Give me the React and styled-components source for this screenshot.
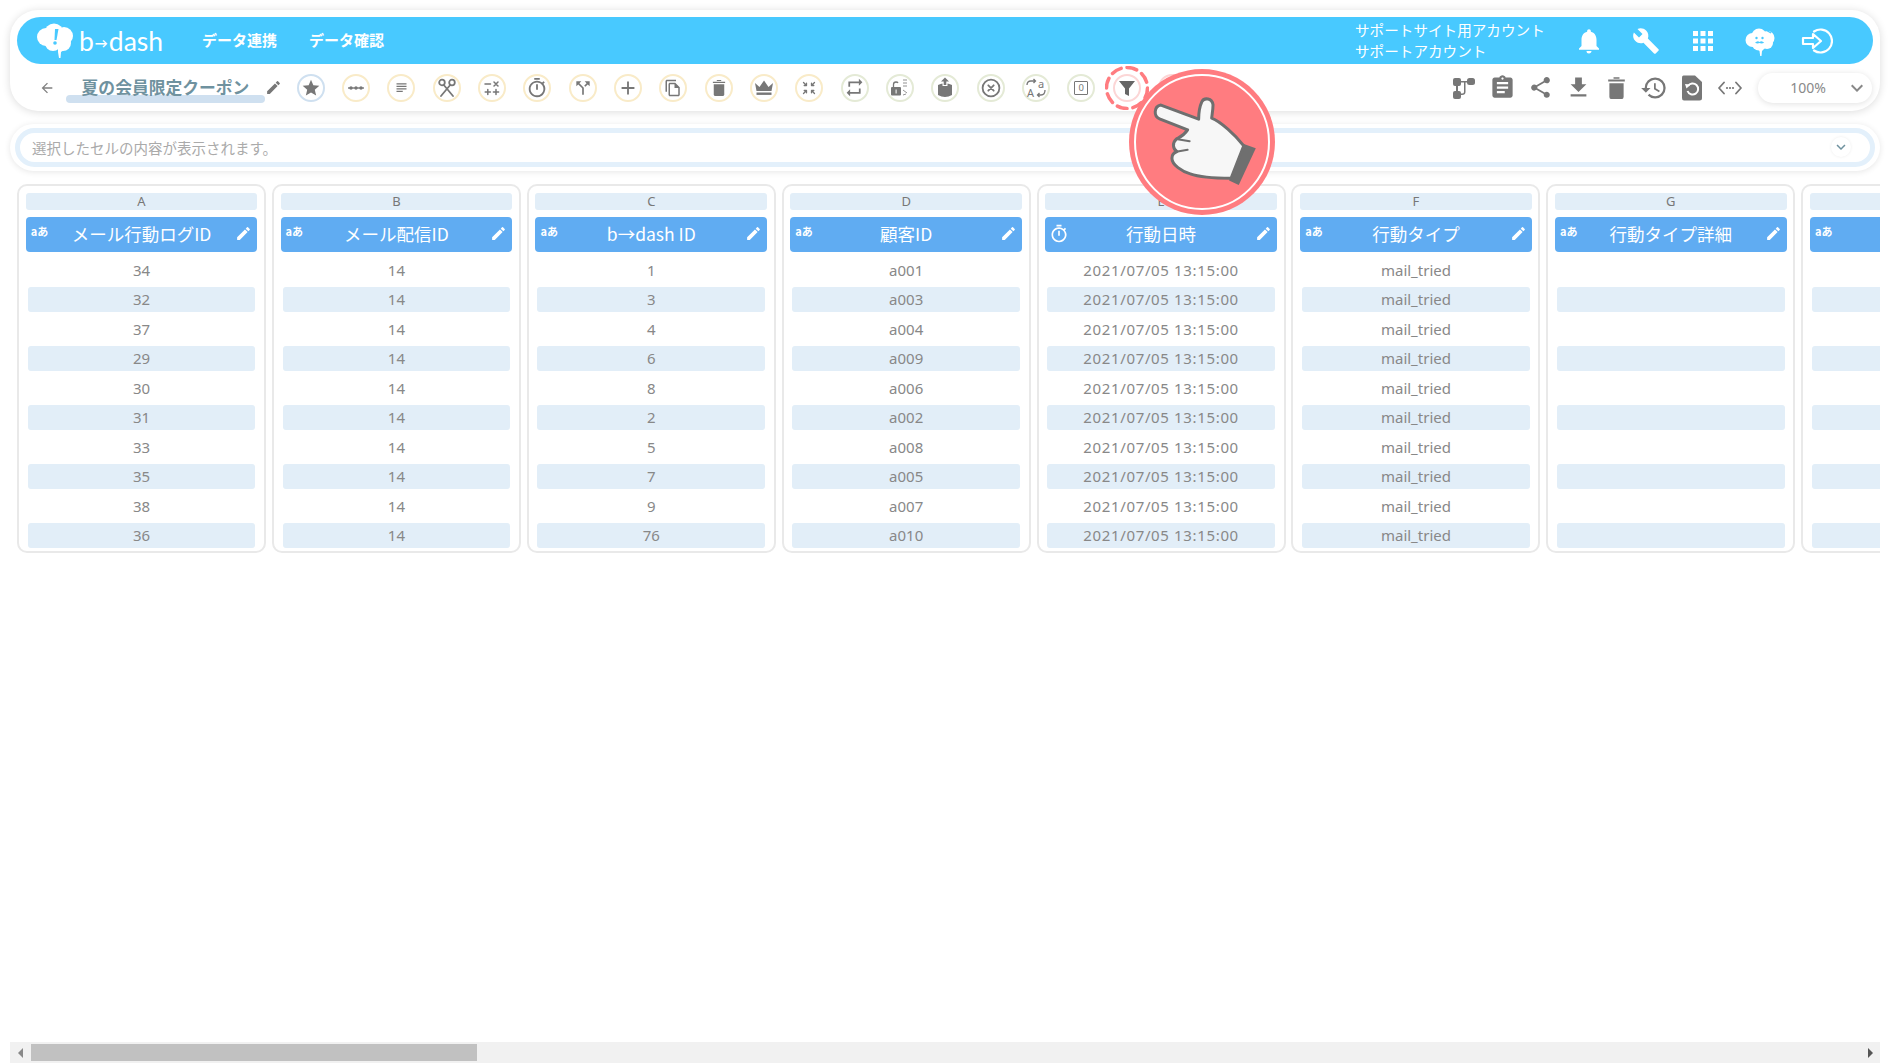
import React from 'react';
import styled, { createGlobalStyle } from 'styled-components';
import {
  MdArrowBack, MdEdit, MdStar, MdSubject, MdCallSplit, MdAdd, MdOutlineFileCopy, MdRepeat,
  MdAssignment, MdShare, MdFileDownload, MdHistory, MdNotifications, MdBuild, MdApps,
  MdExpandMore, MdOutlineTimer,
} from 'react-icons/md';

const GlobalStyle = createGlobalStyle`
  html, body { margin: 0; padding: 0; background: #fff; }
  body { font-family: "Noto Sans CJK JP", "Noto Sans", sans-serif; }
`;

const Page = styled.div`
  position: relative;
  height: 100vh;
  box-sizing: border-box;
  padding: 10px 10px 0;
  display: flex;
  flex-direction: column;
  overflow: hidden;
`;

const HeaderCard = styled.div`
  background: #fff;
  border-radius: 28px;
  padding: 7px 7px 0;
  height: 101px;
  box-sizing: border-box;
  box-shadow: 0 1px 9px rgba(0, 0, 0, 0.14);
`;

const TopBar = styled.div`
  height: 47px;
  background: #48c9ff;
  border-radius: 24px;
  padding: 0 28px 0 19px;
  display: flex;
  align-items: center;
  color: #fff;
`;

const Logo = styled.div`
  display: flex;
  align-items: center;
  gap: 5px;
  width: 166px;
`;

const LogoText = styled.span`
  font-family: "Lato", sans-serif;
  font-size: 26.5px;
  line-height: 30px;
  margin-top: 3px;
  small { font-size: 13px; margin: 0 1px; font-weight: 700; vertical-align: 3px; }
`;

const NavLink = styled.a`
  font-size: 15px;
  font-weight: 700;
  margin: -2px 32px 0 0;
  white-space: nowrap;
`;

const Account = styled.div`
  margin: -2px 0 0 auto;
  width: 205px;
  font-size: 14.6px;
  line-height: 21px;
  white-space: nowrap;
`;

const HeadIcon = styled.div`
  width: 57px;
  display: flex;
  justify-content: center;
  align-items: center;
`;

const ToolRow = styled.div`
  height: 47px;
  display: flex;
  align-items: center;
`;

const BackLink = styled.div`
  margin: 0 11px 0 22px;
  width: 16px;
  height: 16px;
  color: #808080;
  display: flex;
`;

const Title = styled.div`
  position: relative;
  width: 199px;
  text-align: center;
  font-size: 16.8px;
  font-weight: 700;
  color: #6f929f;
  white-space: nowrap;
  margin-top: -2px;
  &::after {
    content: '';
    position: absolute;
    left: 0;
    right: 0;
    bottom: -4px;
    height: 8px;
    border-radius: 4px;
    background: #cfe0f0;
    z-index: 0;
  }
  span { position: relative; z-index: 1; }
`;

const TitleEdit = styled.div`
  width: 31.7px;
  color: #777;
  display: flex;
`;

const Tools = styled.div`
  display: flex;
  gap: 17.33px;
`;

const toneColors = { blue: '#cfe0f0', yellow: '#f9ebc8', green: '#e4ead6', pink: '#fcd6d6' };

const ToolCircle = styled.div`
  position: relative;
  width: 28px;
  height: 28px;
  box-sizing: border-box;
  border-radius: 50%;
  border: 2px solid ${props => toneColors[props.$tone]};
  color: #777;
  display: flex;
  align-items: center;
  justify-content: center;
  flex-shrink: 0;
`;

const DashRing = styled.svg`
  position: absolute;
  left: -10px;
  top: -10px;
`;

const TranslateGlyph = styled.span`
  position: absolute;
  left: ${props => props.$x}px;
  top: ${props => props.$y}px;
  font-family: "Noto Sans", sans-serif;
  font-size: 11px;
  line-height: 12px;
`;

const TranslateBox = styled.div`
  position: relative;
  width: 24px;
  height: 24px;
  flex-shrink: 0;
`;

const ZeroBox = styled.div`
  width: 14px;
  height: 14px;
  box-sizing: border-box;
  border: 1.5px solid currentColor;
  border-radius: 1px;
  font-family: "Noto Sans", sans-serif;
  font-size: 9.5px;
  line-height: 11px;
  text-align: center;
`;

const RightTools = styled.div`
  margin-left: auto;
  display: flex;
  align-items: center;
  color: #777;
`;

const RightIcon = styled.div`
  width: 38px;
  display: flex;
  justify-content: center;
  align-items: center;
`;

const ZoomSelect = styled.div`
  width: 114px;
  height: 30px;
  margin: 0 1px 0 9px;
  border-radius: 15px;
  background: #fff;
  box-shadow: 0 1px 6px rgba(0, 0, 0, 0.12);
  display: flex;
  align-items: center;
  justify-content: center;
  position: relative;
  font-size: 14px;
  color: #8a8a8a;
  font-family: "Noto Sans", sans-serif;
  padding-right: 14px;
  box-sizing: border-box;
`;

const ZoomArrow = styled.div`
  position: absolute;
  right: 3px;
  top: 3px;
  color: #888;
  display: flex;
`;

const FormulaCard = styled.div`
  margin-top: 13px;
  height: 47px;
  box-sizing: border-box;
  padding: 4px 5px;
  background: #fff;
  border-radius: 24px;
  box-shadow: 0 1px 6px rgba(0, 0, 0, 0.1);
`;

const FormulaInput = styled.div`
  height: 39px;
  box-sizing: border-box;
  border: 5px solid #e3f0fb;
  border-radius: 20px;
  padding: 0 19px 1px 12px;
  display: flex;
  align-items: center;
  justify-content: space-between;
  font-size: 14.5px;
  color: #aaa;
`;

const ExpandButton = styled.div`
  width: 20px;
  height: 20px;
  border-radius: 50%;
  background: #fff;
  box-shadow: 0 0 3px rgba(0, 0, 0, 0.08);
  color: #6f929f;
  display: flex;
  align-items: center;
  justify-content: center;
`;

const Sheet = styled.div`
  margin-top: 13px;
  padding-left: 7px;
  display: flex;
  gap: 5.9px;
  overflow: hidden;
  flex: 1;
  align-items: flex-start;
`;

const Column = styled.div`
  width: 249px;
  flex-shrink: 0;
  box-sizing: border-box;
  border: 2px solid #e9e9e9;
  border-radius: 10px;
  padding: 7px 6.7px 2.9px;
  background: #fff;
`;

const ColumnLetter = styled.div`
  height: 17px;
  line-height: 17px;
  background: #e2eef8;
  border-radius: 3px;
  text-align: center;
  font-family: "Noto Sans", sans-serif;
  font-size: 13px;
  color: #777;
`;

const ColumnHead = styled.div`
  position: relative;
  margin-top: 7px;
  height: 35px;
  padding-bottom: 2px;
  box-sizing: border-box;
  background: #60acf2;
  border-radius: 4px;
  color: #fff;
  font-size: 17.5px;
  display: flex;
  align-items: center;
  justify-content: center;
  white-space: nowrap;
`;

const TypeTag = styled.span`
  position: absolute;
  left: 5px;
  top: 7px;
  font-size: 11px;
  line-height: 14px;
  font-weight: 700;
`;

const TypeIcon = styled.span`
  position: absolute;
  left: 4px;
  top: 7px;
  display: flex;
`;

const HeadEdit = styled.span`
  position: absolute;
  right: 5px;
  top: 8px;
  display: flex;
`;

const Rows = styled.div`
  margin-top: 5.5px;
  display: flex;
  flex-direction: column;
  gap: 4.55px;
`;

const Cell = styled.div`
  height: 25px;
  margin: 0 2px;
  border-radius: 3px;
  background: ${props => (props.$striped ? '#e2eef8' : 'transparent')};
  color: #888;
  font-family: "Noto Sans", sans-serif;
  font-size: 15px;
  letter-spacing: ${props => (props.$spaced ? '0.65px' : 'normal')};
  line-height: 25px;
  text-align: center;
  white-space: nowrap;
`;

const ScrollBar = styled.div`
  height: 21px;
  background: #f1f1f1;
  display: flex;
  align-items: center;
  justify-content: space-between;
  padding: 0 7px 0 8px;
  position: relative;
`;

const ScrollThumb = styled.div`
  position: absolute;
  left: 21px;
  top: 2px;
  width: 446px;
  height: 17px;
  background: #c1c1c1;
`;

const ScrollArrow = styled.span`
  width: 0;
  height: 0;
  border-top: 5px solid transparent;
  border-bottom: 5px solid transparent;
  ${props => (props.$right ? 'border-left: 5px solid #555;' : 'border-right: 5px solid #888;')}
`;

// callout over the toolbar, pointing at the filter button
const Callout = styled.div`
  position: absolute;
  left: 1129px;
  top: 69px;
  width: 146px;
  height: 146px;
  border-radius: 50%;
  background: #ff7c80;
  z-index: 5;
  &::before {
    content: '';
    position: absolute;
    inset: 5px;
    border: 2px solid #fff;
    border-radius: 50%;
  }
`;

const HandSvg = styled.svg`
  position: absolute;
  inset: 0;
`;

const Hand = () => (
  <HandSvg viewBox="178 58 434 437" width="146" height="146">
    <polygon points="518,282 556,295 505,405 476,392" fill="#6f6f6f" />
    <path
      d="M272 166 L385 208 C385 190 388 170 395 155 C402 143 425 145 428 165 C428 180 425 195 424 205 C450 215 495 255 520 288 L482 385 C440 385 390 383 360 372 C335 365 305 345 305 325 C305 315 312 308 320 305 C308 298 305 280 318 268 C328 262 340 258 352 240 L268 207 C250 200 250 170 272 166 Z"
      fill="#f7f7f7"
      stroke="#6f6f6f"
      strokeWidth="9"
      strokeLinejoin="round"
    />
    <path d="M322 268 L358 274 M322 305 L352 300" stroke="#6f6f6f" strokeWidth="6" fill="none" strokeLinecap="round" />
  </HandSvg>
);

const BubbleLogo = () => (
  <svg width="38" height="36" viewBox="0 0 38 36">
    <g fill="#fff">
      <circle cx="10" cy="14" r="9" />
      <circle cx="18" cy="10" r="9.5" />
      <circle cx="28" cy="13" r="9" />
      <circle cx="27" cy="20" r="8" />
      <circle cx="17" cy="20" r="8" />
      <path d="M22 24 L31 25 L25 29 L24.5 35 L23 35 L22 29 Z" />
    </g>
    <path d="M19 6 L22.5 6 L20.5 17 L18.5 17 Z" fill="#48c9ff" />
    <circle cx="19" cy="20" r="1.8" fill="#48c9ff" />
  </svg>
);

const BrainFace = () => (
  <svg width="30" height="30" viewBox="0 0 30 30">
    <g fill="#fff">
      <circle cx="7.5" cy="14" r="7" />
      <circle cx="14" cy="10" r="7.5" />
      <circle cx="22.5" cy="12" r="7" />
      <circle cx="22" cy="17" r="6" />
      <circle cx="14" cy="17" r="7.5" />
      <path d="M12 22 L21 21 L17 25 L16.5 30 L15.2 30 L14.5 25 Z" />
    </g>
    <circle cx="11.5" cy="12" r="1.2" fill="#48c9ff" />
    <circle cx="17.5" cy="12" r="1.2" fill="#48c9ff" />
    <path d="M10 16.8 Q12.5 14.2 14.5 16 Q16.8 14.2 19.2 16.8 Q16.5 18 14.5 17 Q12.5 18 10 16.8 Z" fill="#48c9ff" />
    <path d="M19 3 L26 7" stroke="#48c9ff" strokeWidth="1.2" />
  </svg>
);

const ExitIcon = () => (
  <svg width="32" height="28" viewBox="0 0 32 28" fill="none" stroke="#fff" strokeWidth="2.2" strokeLinejoin="round">
    <path d="M13 4.5 A11.5 11.5 0 1 1 13 23.5" strokeLinecap="round" />
    <path d="M2 11 H12 V7 L20 14 L12 21 V17 H2 Z" />
  </svg>
);

const s = { fill: 'none', stroke: 'currentColor', strokeWidth: 1.8, strokeLinecap: 'round', strokeLinejoin: 'round' };

const ChainIcon = () => (
  <svg width="18" height="18" viewBox="0 0 18 18">
    <path d="M1 9 H17" stroke="currentColor" strokeWidth="1.4" />
    <circle cx="4" cy="9" r="1.7" fill="currentColor" />
    <circle cx="9" cy="9" r="1.7" fill="currentColor" />
    <circle cx="14" cy="9" r="1.7" fill="currentColor" />
  </svg>
);

const ScissorsIcon = () => (
  <svg width="20" height="20" viewBox="0 0 20 20" {...s}>
    <circle cx="5" cy="4.5" r="2.8" />
    <circle cx="15" cy="4.5" r="2.8" />
    <path d="M6.8 7 L16 18 M13.2 7 L4 18" />
  </svg>
);

const CalcIcon = () => (
  <svg width="18" height="18" viewBox="0 0 18 18" {...s} strokeWidth="1.5">
    <path d="M2 5 H7.5 M11 3 L15 7 M15 3 L11 7 M4.8 10.5 V15.5 M2.2 13 H7.4 M13 10.5 V15.5 M10.4 13 H15.6" />
  </svg>
);

const TrashIcon = ({ size = 16 }) => (
  <svg width={size} height={size * 1.25} viewBox="0 0 16 20" fill="currentColor">
    <path d="M1 3 H15 V4.6 H1 Z M5.5 1 H10.5 V2.4 H5.5 Z" />
    <path d="M2 6 H14 V17.5 Q14 19.5 12 19.5 H4 Q2 19.5 2 17.5 Z" />
  </svg>
);

const CrownIcon = () => (
  <svg width="20" height="18" viewBox="0 0 20 18" fill="currentColor">
    <path d="M1 4 L5.5 8 L10 1.5 L14.5 8 L19 4 L17.5 12 H2.5 Z" />
    <rect x="2.5" y="13.5" width="15" height="2.4" />
  </svg>
);

const CompressIcon = () => (
  <svg width="18" height="18" viewBox="0 0 18 18" {...s} strokeWidth="1.3">
    <path d="M3.5 3.5 L6.5 6.5 M6.5 4.2 V6.5 H4.2 M14.5 3.5 L11.5 6.5 M11.5 4.2 V6.5 H13.8 M3.5 14.5 L6.5 11.5 M6.5 13.8 V11.5 H4.2 M14.5 14.5 L11.5 11.5 M11.5 13.8 V11.5 H13.8" />
  </svg>
);

const LockIcon = () => (
  <svg width="22" height="22" viewBox="0 0 22 22">
    <rect x="2" y="10" width="10" height="8.5" rx="1" fill="currentColor" />
    <path d="M4.5 10 V7.5 Q4.5 5 7 5 Q8.5 5 9 6" fill="none" stroke="currentColor" strokeWidth="1.3" />
    <path d="M6.6 12.5 H7.6 V16.5 H6.6 Z" fill="#fff" />
    <path d="M14 3 H18 M14 6 H18 M14 9 H18 M14 13 L18 16 M14 18 L17 17" fill="none" stroke="currentColor" strokeWidth="0.8" />
  </svg>
);

const UploadBoxIcon = () => (
  <svg width="20" height="22" viewBox="0 0 20 22" fill="currentColor">
    <path d="M3 8 Q6 6.5 7.5 6.5 V9 H12.5 V6.5 Q14 6.5 17 8 V18 Q10 22 3 18 Z" />
    <path d="M10 0.5 L14 4.5 H11.3 V8 H8.7 V4.5 H6 Z" />
  </svg>
);

const CircleXIcon = () => (
  <svg width="20" height="20" viewBox="0 0 20 20" {...s}>
    <circle cx="10" cy="10" r="8.4" />
    <path d="M7.3 7.3 L12.7 12.7 M12.7 7.3 L7.3 12.7" />
  </svg>
);

const TranslateIcon = () => (
  <TranslateBox>
    <TranslateGlyph $x={3} $y={11}>A</TranslateGlyph>
    <TranslateGlyph $x={14} $y={2}>a</TranslateGlyph>
    <svg width="24" height="24" viewBox="0 0 24 24">
      <path d="M3 9 Q3 5 7 5 H11 M9.5 3 L11.5 5 L9.5 7 M21 14 Q21 19 17 19 H14 M15.5 17 L13.5 19 L15.5 21" fill="none" stroke="currentColor" strokeWidth="1.3" />
    </svg>
  </TranslateBox>
);

const FunnelIcon = () => (
  <svg width="18" height="18" viewBox="0 0 18 18" fill="#666">
    <path d="M1 2 H17 L11 9.5 V17 L7 15 V9.5 Z" />
  </svg>
);

const FlowIcon = () => (
  <svg width="24" height="24" viewBox="0 0 24 24" fill="currentColor">
    <rect x="1" y="2" width="8" height="8" rx="2" />
    <rect x="15" y="2" width="8" height="7" rx="2.5" />
    <rect x="1" y="15" width="8" height="8" rx="2" />
    <path d="M9 5 H15 V6.5 H9 Z M4 10 H6 V15 H4 Z M12 5 H13.5 V16 Q13.5 19 10 19 H9 V17.5 H10 Q12 17.5 12 16 Z" />
  </svg>
);

const FileResetIcon = () => (
  <svg width="22" height="26" viewBox="0 0 22 26">
    <path d="M2.5 0.5 H14 L21 7 V23 Q21 25.5 18.5 25.5 H3 Q1 25.5 1 23 V2.5 Q1 0.5 2.5 0.5 Z" fill="currentColor" />
    <path d="M7 11 A5.5 5.5 0 1 1 6.5 16" fill="none" stroke="#fff" strokeWidth="2" />
    <path d="M4 9 L9.5 9.5 L5.5 13.5 Z" fill="#fff" />
  </svg>
);

const CodeDotsIcon = () => (
  <svg width="24" height="16" viewBox="0 0 24 16" {...s}>
    <path d="M6 2.5 L1 8 L6 13.5 M18 2.5 L23 8 L18 13.5" />
    <path d="M9 8 H9.01 M12 8 H12.01 M15 8 H15.01" strokeWidth="2.2" />
  </svg>
);

const tools = [
  { tone: 'blue', icon: <MdStar size={20} /> },
  { tone: 'yellow', icon: <ChainIcon /> },
  { tone: 'yellow', icon: <MdSubject size={15} /> },
  { tone: 'yellow', icon: <ScissorsIcon /> },
  { tone: 'yellow', icon: <CalcIcon /> },
  { tone: 'yellow', icon: <MdOutlineTimer size={22} /> },
  { tone: 'yellow', icon: <MdCallSplit size={20} /> },
  { tone: 'yellow', icon: <MdAdd size={22} /> },
  { tone: 'yellow', icon: <MdOutlineFileCopy size={18} /> },
  { tone: 'yellow', icon: <TrashIcon size={14} /> },
  { tone: 'yellow', icon: <CrownIcon /> },
  { tone: 'yellow', icon: <CompressIcon /> },
  { tone: 'green', icon: <MdRepeat size={21} /> },
  { tone: 'green', icon: <LockIcon /> },
  { tone: 'green', icon: <UploadBoxIcon /> },
  { tone: 'green', icon: <CircleXIcon /> },
  { tone: 'green', icon: <TranslateIcon /> },
  { tone: 'green', icon: <ZeroBox>0</ZeroBox> },
  { tone: 'pink', icon: <FunnelIcon />, target: true },
  { tone: 'pink', icon: null },
];

const ids = ['34', '32', '37', '29', '30', '31', '33', '35', '38', '36'];
const bdashIds = ['1', '3', '4', '6', '8', '2', '5', '7', '9', '76'];
const customers = ['a001', 'a003', 'a004', 'a009', 'a006', 'a002', 'a008', 'a005', 'a007', 'a010'];
const same = value => Array(10).fill(value);

const columns = [
  { letter: 'A', name: 'メール行動ログID', cells: ids },
  { letter: 'B', name: 'メール配信ID', cells: same('14') },
  { letter: 'C', name: 'b→dash ID', cells: bdashIds },
  { letter: 'D', name: '顧客ID', cells: customers },
  { letter: 'E', name: '行動日時', cells: same('2021/07/05 13:15:00'), timer: true },
  { letter: 'F', name: '行動タイプ', cells: same('mail_tried') },
  { letter: 'G', name: '行動タイプ詳細', cells: same('') },
  { letter: '', name: '', cells: same(''), clipped: true },
];

const App = () => (
  <Page>
    <GlobalStyle />
    <HeaderCard>
      <TopBar>
        <Logo>
          <BubbleLogo />
          <LogoText>b<small>→</small>dash</LogoText>
        </Logo>
        <NavLink>データ連携</NavLink>
        <NavLink>データ確認</NavLink>
        <Account>
          サポートサイト用アカウント
          <br />
          サポートアカウント
        </Account>
        <HeadIcon><MdNotifications size={30} /></HeadIcon>
        <HeadIcon><MdBuild size={28} /></HeadIcon>
        <HeadIcon><MdApps size={30} /></HeadIcon>
        <HeadIcon><BrainFace /></HeadIcon>
        <HeadIcon><ExitIcon /></HeadIcon>
      </TopBar>
      <ToolRow>
        <BackLink><MdArrowBack size={16} /></BackLink>
        <Title><span>夏の会員限定クーポン</span></Title>
        <TitleEdit><MdEdit size={17} /></TitleEdit>
        <Tools>
          {tools.map((tool, i) => (
            <ToolCircle key={i} $tone={tool.tone}>
              {tool.icon}
              {tool.target && (
                <DashRing width="44" height="44" viewBox="0 0 44 44">
                  <circle cx="22" cy="22" r="20.5" fill="none" stroke="#ff7c80" strokeWidth="3.5" strokeDasharray="10 6" strokeLinecap="round" />
                </DashRing>
              )}
            </ToolCircle>
          ))}
        </Tools>
        <RightTools>
          <RightIcon><FlowIcon /></RightIcon>
          <RightIcon><MdAssignment size={27} /></RightIcon>
          <RightIcon><MdShare size={25} /></RightIcon>
          <RightIcon><MdFileDownload size={27} /></RightIcon>
          <RightIcon><TrashIcon size={19} /></RightIcon>
          <RightIcon><MdHistory size={28} /></RightIcon>
          <RightIcon><FileResetIcon /></RightIcon>
          <RightIcon><CodeDotsIcon /></RightIcon>
          <ZoomSelect>
            100%
            <ZoomArrow><MdExpandMore size={24} /></ZoomArrow>
          </ZoomSelect>
        </RightTools>
      </ToolRow>
    </HeaderCard>

    <FormulaCard>
      <FormulaInput>
        選択したセルの内容が表示されます。
        <ExpandButton><MdExpandMore size={18} /></ExpandButton>
      </FormulaInput>
    </FormulaCard>

    <Sheet>
      {columns.map(col => (
        <Column key={col.letter || 'next'}>
          <ColumnLetter>{col.letter}</ColumnLetter>
          <ColumnHead>
            {col.timer ? (
              <TypeIcon><MdOutlineTimer size={20} /></TypeIcon>
            ) : (
              <TypeTag>aあ</TypeTag>
            )}
            {col.name}
            {!col.clipped && <HeadEdit><MdEdit size={17} /></HeadEdit>}
          </ColumnHead>
          <Rows>
            {col.cells.map((value, i) => (
              <Cell key={i} $striped={i % 2 === 1} $spaced={Boolean(col.timer)}>{value}</Cell>
            ))}
          </Rows>
        </Column>
      ))}
    </Sheet>

    <ScrollBar>
      <ScrollArrow />
      <ScrollThumb />
      <ScrollArrow $right />
    </ScrollBar>

    <Callout>
      <Hand />
    </Callout>
  </Page>
);

export default App;
